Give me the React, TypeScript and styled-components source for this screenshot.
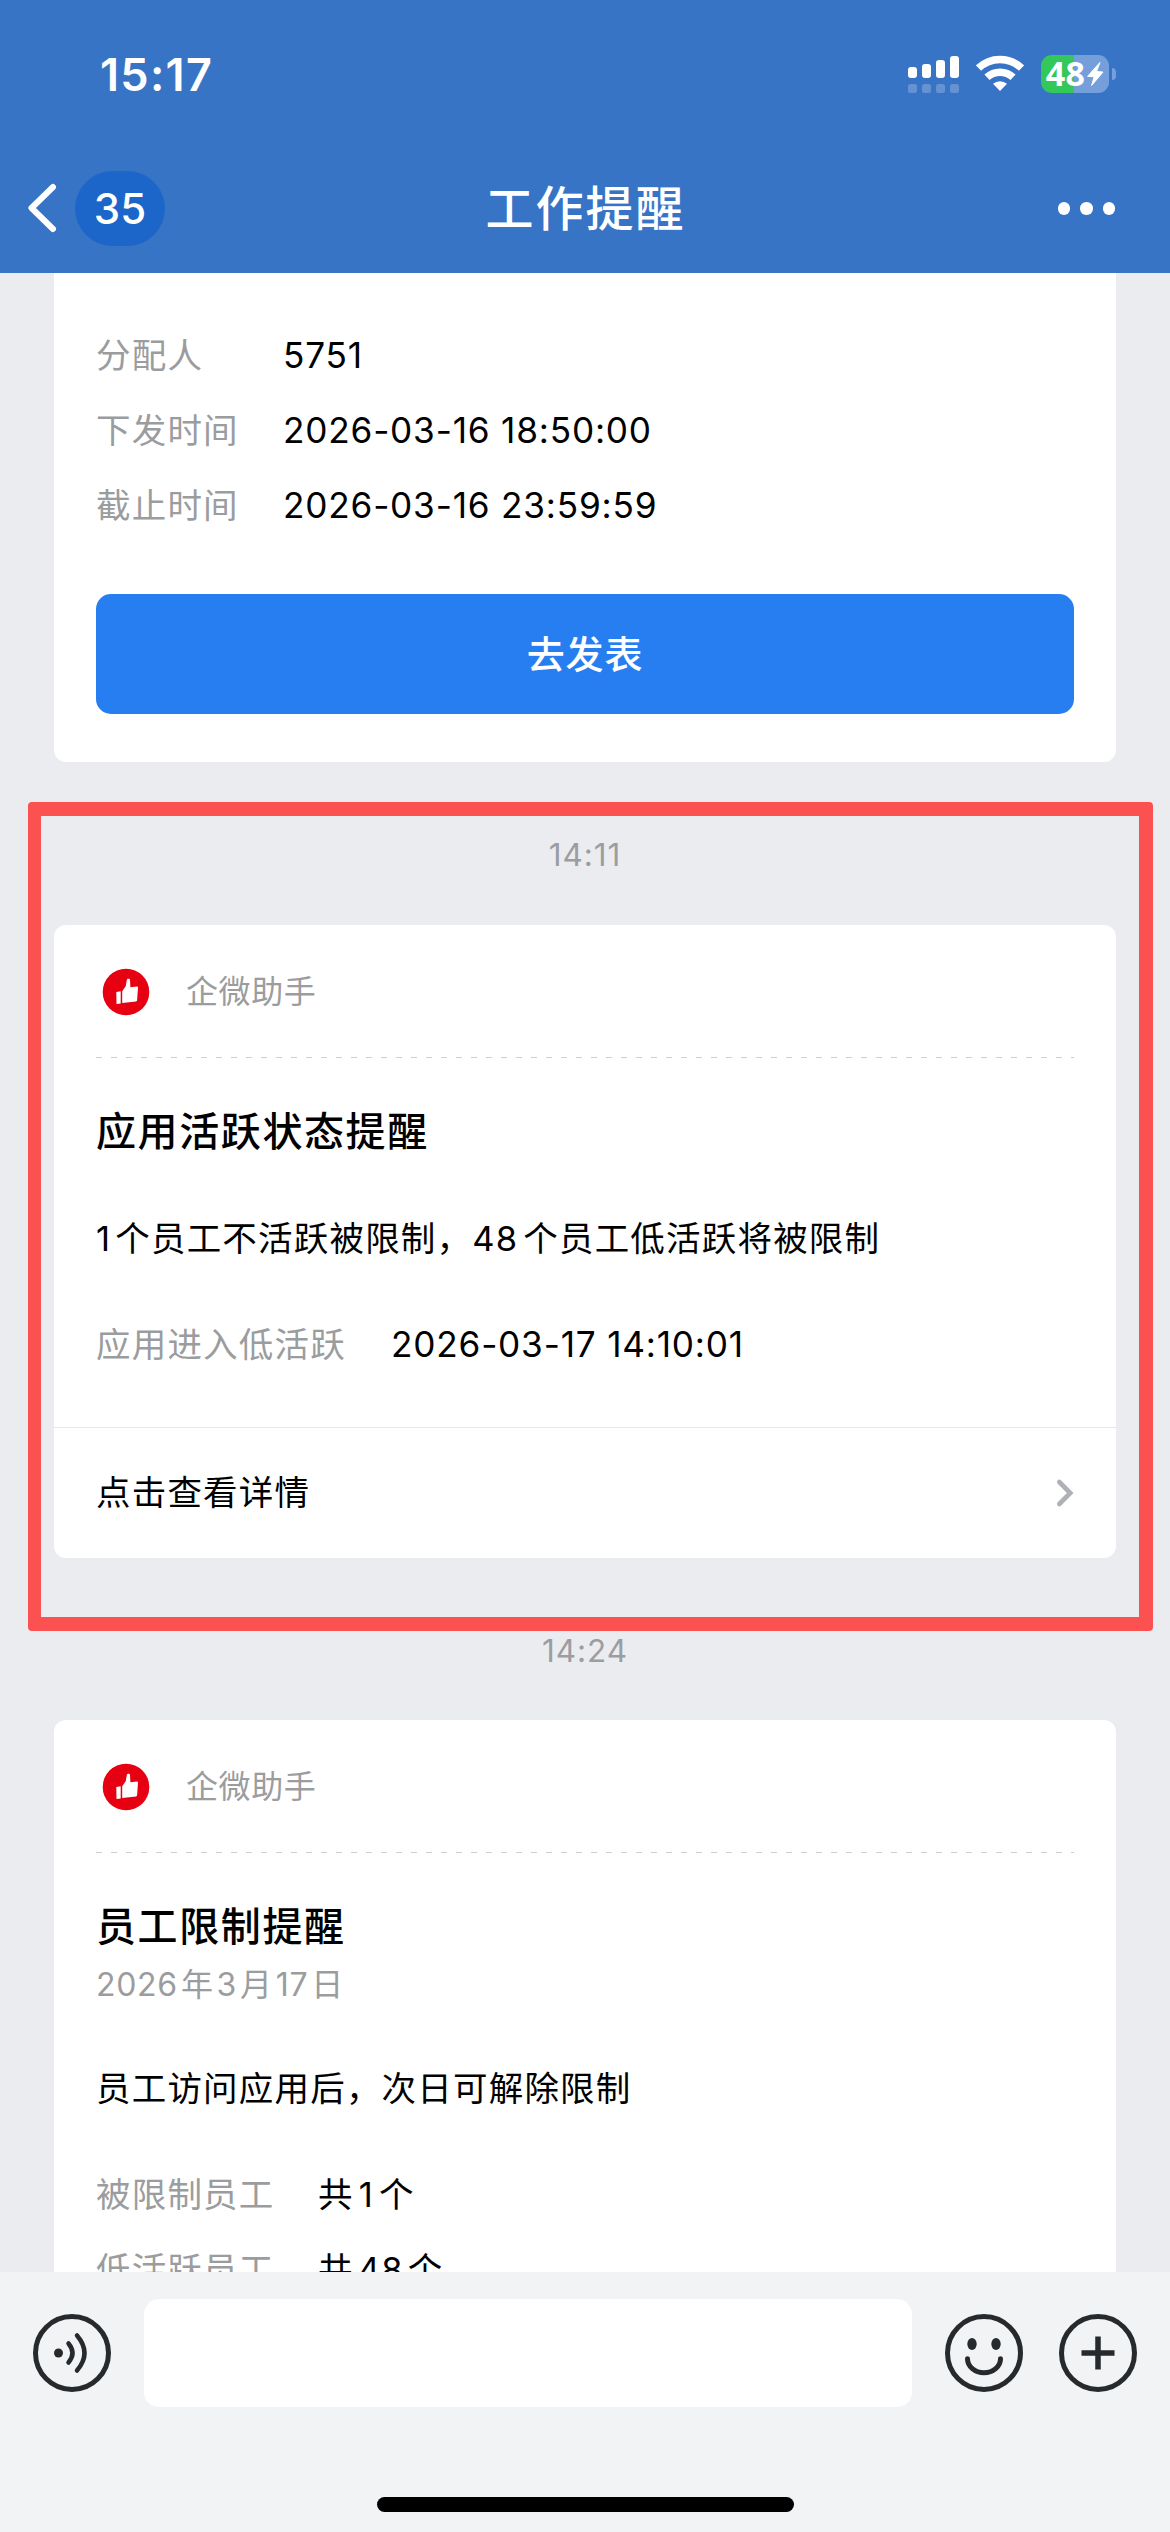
import React from "react";
import styled, { createGlobalStyle } from "styled-components";

const Global = createGlobalStyle`
  * { box-sizing: border-box; }
  html, body { margin: 0; padding: 0; }
  body { font-family: Inter, "Noto Sans CJK SC", sans-serif; background: #ebecf0; color: #000; }
`;

const Screen = styled.div`
  position: relative;
  display: flex;
  flex-direction: column;
  width: 1170px;
  height: 2532px;
  overflow: hidden;
  background: #ebecf0;
`;

const Header = styled.header`
  flex: none;
  height: 273px;
  background: #3874c6;
  color: #fff;
`;

const StatusBar = styled.div`
  display: flex;
  justify-content: space-between;
  height: 145px;
  padding: 45px 54px 0 100px;
`;

const Clock = styled.div`
  font-size: 45px;
  font-weight: 600;
  line-height: 60px;
  letter-spacing: 1.3px;
`;

const StatusIcons = styled.div`
  display: flex;
  align-items: center;
  height: 38px;
  margin-top: 10px;
`;

const Signal = styled.svg`
  width: 51px;
  height: 38px;
  margin-right: 17px;
`;

const Wifi = styled.svg`
  width: 48px;
  height: 38px;
  margin-right: 17px;
`;

const Battery = styled.div`
  display: flex;
  align-items: center;
  justify-content: center;
  gap: 2px;
  width: 68px;
  height: 38px;
  border-radius: 11px;
  background: linear-gradient(90deg, #34c759 0 33px, #749fda 33px);
`;

const BatteryText = styled.span`
  font-family: "Noto Sans", sans-serif;
  font-size: 34px;
  font-weight: 700;
  line-height: 37px;
  padding-bottom: 1px;
  letter-spacing: 0.3px;
`;

const Bolt = styled.svg`
  flex: none;
  width: 17px;
  height: 24px;
  overflow: visible;
`;

const BatteryCap = styled.span`
  width: 4px;
  height: 12px;
  margin-left: 3px;
  border-radius: 0 5px 5px 0;
  background: #749fda;
`;

const NavBar = styled.nav`
  display: grid;
  grid-template-columns: 1fr auto 1fr;
  align-items: center;
  height: 127px;
  padding: 0 55px 0 26px;
`;

const BackGroup = styled.div`
  display: flex;
  align-items: center;
`;

const BackIcon = styled.svg`
  width: 32px;
  height: 54px;
`;

const Badge = styled.span`
  display: flex;
  align-items: center;
  justify-content: center;
  width: 90px;
  height: 75px;
  margin-left: 17px;
  border-radius: 38px;
  background: #1c66c9;
  font-size: 42px;
  font-weight: 500;
`;

const NavTitle = styled.h1`
  margin: 0 0 0 30px;
  font-size: 48px;
  font-weight: 500;
  line-height: 60px;
  letter-spacing: 2px;
`;

const More = styled.div`
  display: flex;
  justify-content: flex-end;
  gap: 10px;
`;

const Dot = styled.span`
  width: 12.5px;
  height: 12.5px;
  border-radius: 50%;
  background: #fff;
`;

const Feed = styled.main`
  flex: 1;
  min-height: 0;
  overflow: hidden;
  padding: 0 54px;
`;

const Card = styled.section<{ $continued?: boolean }>`
  border-radius: ${(p) => (p.$continued ? "0 0 12px 12px" : "12px")};
  background: #fff;
`;

const CardBody = styled.div<{ $top?: number; $bottom?: number }>`
  padding: ${(p) => p.$top ?? 0}px 42px ${(p) => p.$bottom ?? 0}px;
`;

const Field = styled.div`
  display: flex;
  height: 75px;
  font-size: 34.5px;
  line-height: 75px;
  letter-spacing: 1.2px;
  white-space: nowrap;
`;

const FieldLabel = styled.span<{ $width: number }>`
  width: ${(p) => p.$width}px;
  color: #9b9c9e;
`;

const FieldValue = styled.span<{ $numeric?: boolean }>`
  font-size: ${(p) => (p.$numeric ? 35.2 : 34.5)}px;
  letter-spacing: ${(p) => (p.$numeric ? 0.8 : 1.2)}px;
`;

const Num = styled.span<{ $before?: number; $after?: number }>`
  margin-left: ${(p) => p.$before ?? 0}px;
  margin-right: ${(p) => p.$after ?? 0}px;
`;

const PrimaryButton = styled.button`
  display: block;
  width: 100%;
  height: 120px;
  margin-top: 51px;
  padding: 0;
  border: 0;
  border-radius: 15px;
  background: #277ef1;
  color: #fff;
  font: 500 38px/120px Inter, "Noto Sans CJK SC", sans-serif;
  letter-spacing: 0.8px;
`;

const Timestamp = styled.time<{ $top: number; $height: number }>`
  display: block;
  height: ${(p) => p.$height}px;
  padding-top: ${(p) => p.$top}px;
  color: #9c9da0;
  font-size: 31.5px;
  line-height: 40px;
  letter-spacing: 0.9px;
  text-align: center;
`;

const Source = styled.div`
  display: flex;
  align-items: center;
  height: 133px;
  padding-left: 6px;
  color: #9b9c9e;
  font-size: 32px;
  line-height: 48px;
  letter-spacing: 0.6px;
  background: repeating-linear-gradient(90deg, #cfcfd0 0 6px, transparent 6px 15px) 0 132px / 100% 1px no-repeat;
`;

const SourceIcon = styled.svg`
  width: 48px;
  height: 48px;
  margin-right: 36px;
`;

const CardTitle = styled.h2`
  margin: 0;
  padding-top: 44px;
  font-size: 40px;
  font-weight: 500;
  line-height: 60px;
  letter-spacing: 1.6px;
`;

const DateLine = styled.div`
  height: 54px;
  color: #9b9c9e;
  font-size: 32px;
  line-height: 55px;
  letter-spacing: 0.7px;
`;

const Description = styled.p<{ $top: number }>`
  margin: 0;
  padding: ${(p) => p.$top}px 0 38px;
  font-size: 34.5px;
  line-height: 60px;
  letter-spacing: 1.2px;
  white-space: nowrap;
`;

const LinkRow = styled.div`
  display: flex;
  align-items: center;
  justify-content: space-between;
  height: 131px;
  padding: 0 42px;
  border-top: 1px solid #e6e7e9;
  font-size: 34.5px;
  line-height: 60px;
  letter-spacing: 1.2px;
`;

const Chevron = styled.svg`
  width: 20px;
  height: 30px;
`;

const Footer = styled.footer`
  flex: none;
  height: 260px;
  background: #f1f3f5;
`;

const Composer = styled.div`
  display: flex;
  align-items: center;
  height: 162px;
  padding: 0 33px;
`;

const MessageField = styled.div`
  width: 768px;
  height: 108px;
  margin: 0 33px;
  border-radius: 15px;
  background: #fff;
`;

const RoundIcon = styled.svg`
  flex: none;
  width: 78px;
  height: 78px;
  & + & { margin-left: 36px; }
`;

const HomeIndicator = styled.div`
  width: 417px;
  height: 15px;
  margin: 63px auto 0;
  border-radius: 8px;
  background: #000;
`;

const Highlight = styled.div`
  position: absolute;
  left: 28px;
  top: 802px;
  width: 1125px;
  height: 829px;
  border: 14px solid #fb5151;
  border-left-width: 13px;
  border-radius: 4px;
`;

function SourceLine() {
  return (
    <Source>
      <SourceIcon viewBox="0 0 48 48">
        <circle cx="24" cy="24" r="23.3" fill="#e60012" />
        <path
          d="M14.300 24l4.400-.8v12.200l-4.200.6zM20.200 23.200l3.500-5 1.200-6.600c.3-1.100 2.900-1.200 3.100.2l.4 7.400 6.500-.6c.8 0 1.200.4 1.100 1.200l-.9 12.400c-.1.800-.4 1.100-1.100 1.200l-13.800 1.700z"
          fill="#fff"
        />
      </SourceIcon>
      企微助手
    </Source>
  );
}

export default function App() {
  return (
    <>
      <Global />
      <Screen>
        <Header>
          <StatusBar>
            <Clock>15:17</Clock>
            <StatusIcons>
              <Signal viewBox="0 0 51 38" fill="#fff">
                <rect x="0" y="12" width="9" height="11" rx="3" />
                <rect x="14" y="9" width="9" height="14" rx="3" />
                <rect x="28" y="5" width="9" height="18" rx="3" />
                <rect x="42" y="1" width="9" height="22" rx="3" />
                <g opacity=".22">
                  <rect x="0" y="29" width="9" height="9" rx="2.5" />
                  <rect x="14" y="29" width="9" height="9" rx="2.5" />
                  <rect x="28" y="29" width="9" height="9" rx="2.5" />
                  <rect x="42" y="29" width="9" height="9" rx="2.5" />
                </g>
              </Signal>
              <Wifi viewBox="0 0 48 38">
                <g fill="none" stroke="#fff" strokeWidth="7.5">
                  <path d="M2.500 13.100a31 31 0 0 1 43 0" />
                  <path d="M11 22.300a19 19 0 0 1 26 0" />
                </g>
                <path d="M24 36l-7-7.200a10.500 10.500 0 0 1 14 0z" fill="#fff" />
              </Wifi>
              <Battery>
                <BatteryText>48</BatteryText>
                <Bolt viewBox="0 0 17 24">
                  <path
                    d="M13 .4L.6 14.300l6.500.5L4.600 23.500 16 10.100 9.500 9.500z"
                    fill="#fff"
                    stroke="#fff"
                    strokeWidth="1"
                    strokeLinejoin="round"
                  />
                </Bolt>
              </Battery>
              <BatteryCap />
            </StatusIcons>
          </StatusBar>
          <NavBar>
            <BackGroup>
              <BackIcon viewBox="0 0 32 54">
                <path
                  d="M27 5L5.500 26 27 47"
                  fill="none"
                  stroke="#fff"
                  strokeWidth="6"
                  strokeLinecap="round"
                  strokeLinejoin="round"
                />
              </BackIcon>
              <Badge>35</Badge>
            </BackGroup>
            <NavTitle>工作提醒</NavTitle>
            <More>
              <Dot />
              <Dot />
              <Dot />
            </More>
          </NavBar>
        </Header>

        <Feed>
          <Card $continued>
            <CardBody $top={45} $bottom={48}>
              <Field>
                <FieldLabel $width={187}>分配人</FieldLabel>
                <FieldValue $numeric>5751</FieldValue>
              </Field>
              <Field>
                <FieldLabel $width={187}>下发时间</FieldLabel>
                <FieldValue $numeric>2026-03-16 18:50:00</FieldValue>
              </Field>
              <Field>
                <FieldLabel $width={187}>截止时间</FieldLabel>
                <FieldValue $numeric>2026-03-16 23:59:59</FieldValue>
              </Field>
              <PrimaryButton>去发表</PrimaryButton>
            </CardBody>
          </Card>

          <Timestamp $top={73} $height={163}>14:11</Timestamp>

          <Card>
            <CardBody $bottom={45}>
              <SourceLine />
              <CardTitle>应用活跃状态提醒</CardTitle>
              <Description $top={47}>
                <Num $after={4}>1</Num>个员工不活跃被限制，<Num $after={5}>48</Num>个员工低活跃将被限制
              </Description>
              <Field>
                <FieldLabel $width={295}>应用进入低活跃</FieldLabel>
                <FieldValue $numeric>2026-03-17 14:10:01</FieldValue>
              </Field>
            </CardBody>
            <LinkRow>
              点击查看详情
              <Chevron viewBox="0 0 20 30">
                <path
                  d="M5.300 4l11 11-11 11"
                  fill="none"
                  stroke="#aeb1b6"
                  strokeWidth="4.6"
                  strokeLinecap="round"
                />
              </Chevron>
            </LinkRow>
          </Card>

          <Timestamp $top={73} $height={162}>14:24</Timestamp>

          <Card>
            <CardBody>
              <SourceLine />
              <CardTitle>员工限制提醒</CardTitle>
              <DateLine>
                <Num $after={3}>2026</Num>年<Num $before={3} $after={3}>3</Num>月
                <Num $before={3} $after={3}>17</Num>日
              </DateLine>
              <Description $top={48}>员工访问应用后，次日可解除限制</Description>
              <Field>
                <FieldLabel $width={222}>被限制员工</FieldLabel>
                <FieldValue>
                  共<Num $before={5} $after={5}>1</Num>个
                </FieldValue>
              </Field>
              <Field>
                <FieldLabel $width={222}>低活跃员工</FieldLabel>
                <FieldValue>
                  共<Num $before={4} $after={4}>48</Num>个
                </FieldValue>
              </Field>
            </CardBody>
          </Card>
        </Feed>

        <Footer>
          <Composer>
            <RoundIcon viewBox="0 0 78 78" fill="none" stroke="#262a2d" strokeLinecap="round">
              <circle cx="39" cy="39" r="36.5" strokeWidth="5" />
              <circle cx="25.5" cy="39" r="4.5" fill="#262a2d" stroke="none" />
              <path d="M35.500 29.500q8 9.500 0 19M44 21.500q15 17.500 0 35" strokeWidth="4.5" />
            </RoundIcon>
            <MessageField />
            <RoundIcon viewBox="0 0 78 78" fill="none" stroke="#262a2d" strokeLinecap="round">
              <circle cx="39" cy="39" r="36.5" strokeWidth="5" />
              <ellipse cx="27" cy="30" rx="4.7" ry="6" fill="#262a2d" stroke="none" />
              <ellipse cx="51" cy="30" rx="4.7" ry="6" fill="#262a2d" stroke="none" />
              <path d="M22.500 44.800a16.500 14 0 0 0 33 0" strokeWidth="5" />
            </RoundIcon>
            <RoundIcon viewBox="0 0 78 78" fill="none" stroke="#262a2d">
              <circle cx="39" cy="39" r="36.5" strokeWidth="5" />
              <path d="M22.500 39h33M39 22.500v33" strokeWidth="5.5" />
            </RoundIcon>
          </Composer>
          <HomeIndicator />
        </Footer>
        <Highlight />
      </Screen>
    </>
  );
}
